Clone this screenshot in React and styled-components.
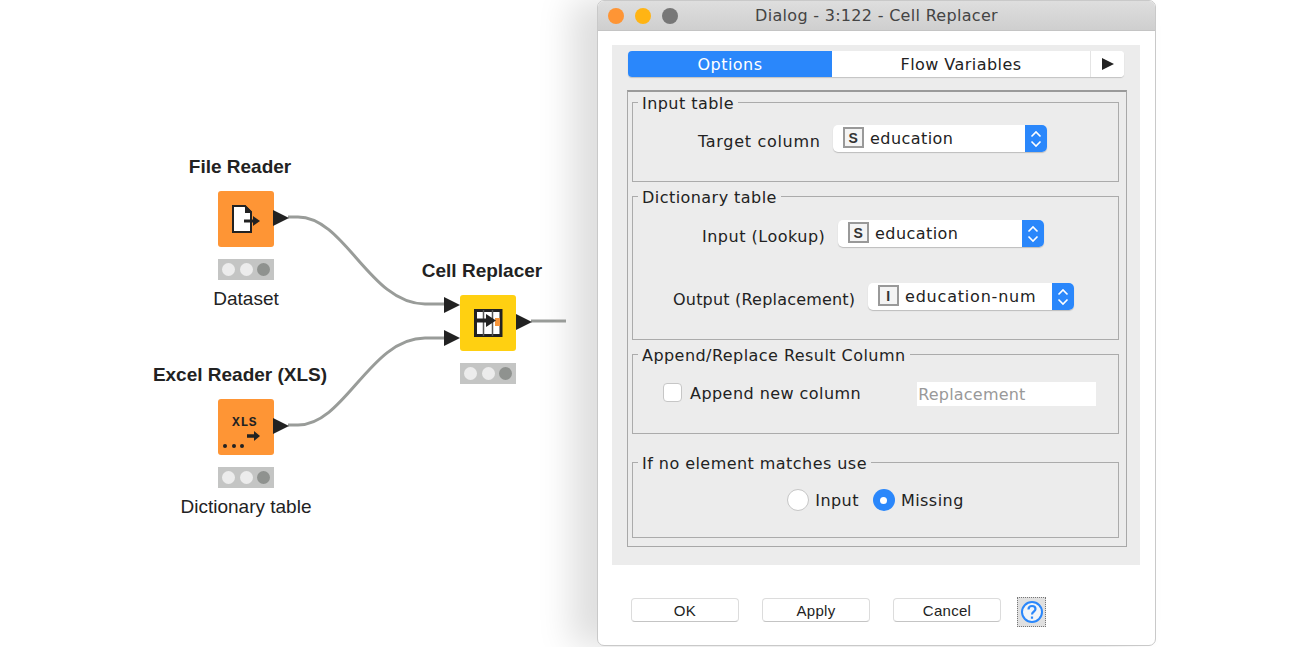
import React from "react";
import styled, { createGlobalStyle } from "styled-components";

const Global = createGlobalStyle`
  html, body { margin: 0; padding: 0; background: #fff; }
  body { font-family: "DejaVu Sans", sans-serif; color: #222; }
`;

const Page = styled.div`
  display: flex;
  width: 1302px;
  height: 647px;
  overflow: hidden;
  background: #fff;
`;

const Canvas = styled.div`
  position: relative;
  flex: none;
  width: 597px;
  height: 647px;
`;

const Wires = styled.svg`
  position: absolute;
  left: 0;
  top: 0;
`;

const NodeColumn = styled.div`
  position: absolute;
  left: ${(p) => p.$x}px;
  top: ${(p) => p.$y}px;
  width: 200px;
  display: flex;
  flex-direction: column;
  align-items: center;
  font-family: "Liberation Sans", Arial, sans-serif;
`;

const NodeTitle = styled.div`
  height: 20px;
  line-height: 20px;
  font-size: 19px;
  font-weight: 700;
  color: #222;
  white-space: nowrap;
  margin-right: 12px;
`;

const NodeBody = styled.div`
  position: relative;
  width: 56px;
  height: 56px;
  margin-top: 14px;
  border-radius: 3px;
  background: ${(p) => p.$color};
`;

const NodeIcon = styled.svg`
  position: absolute;
  left: 0;
  top: 0;
`;

const Port = styled.svg`
  position: absolute;
  left: ${(p) => p.$x}px;
  top: ${(p) => p.$y}px;
`;

const StatusBar = styled.div`
  width: 56px;
  height: 21px;
  margin-top: 12px;
  padding: 0 4px;
  box-sizing: border-box;
  display: flex;
  align-items: center;
  justify-content: space-between;
  background: #c4c5c4;
`;

const Lamp = styled.span`
  width: 13px;
  height: 13px;
  border-radius: 50%;
  background: ${(p) => (p.$off ? "#8f928f" : "#ececec")};
`;

const NodeLabel = styled.div`
  height: 20px;
  line-height: 20px;
  margin-top: 9px;
  font-size: 19px;
  color: #222;
  white-space: nowrap;
`;

const Dialog = styled.div`
  flex: none;
  width: 559px;
  height: 646px;
  box-sizing: border-box;
  border: 1px solid #c9c9c9;
  border-radius: 7px;
  background: #fff;
  box-shadow: -26px 0 34px rgba(0, 0, 0, 0.13);
  overflow: hidden;
`;

const TitleBar = styled.div`
  position: relative;
  height: 30px;
  box-sizing: border-box;
  display: flex;
  align-items: center;
  justify-content: center;
  background: linear-gradient(#dedede, #cfcfcf);
  border-bottom: 1px solid #c4c4c4;
  font-size: 16px;
  letter-spacing: 0.3px;
  color: #444;
`;

const Lights = styled.div`
  position: absolute;
  left: 10px;
  top: 7px;
  display: flex;
  gap: 11px;
`;

const Light = styled.span`
  width: 16px;
  height: 16px;
  border-radius: 50%;
  background: ${(p) => p.$color};
`;

const Panel = styled.div`
  width: 528px;
  height: 520px;
  margin: 14px 0 0 14px;
  padding-top: 6px;
  box-sizing: border-box;
  background: #ececec;
`;

const TabBar = styled.div`
  display: flex;
  width: 496px;
  height: 26px;
  margin-left: 16px;
  border-radius: 4px;
  background: #fff;
  box-shadow: 0 1px 1px #c2c2c2;
  overflow: hidden;
  font-size: 16px;
  letter-spacing: 0.45px;
`;

const Tab = styled.div`
  display: flex;
  align-items: center;
  justify-content: center;
  width: ${(p) => p.$width}px;
  background: ${(p) => (p.$active ? "#2a87fb" : "#fff")};
  color: ${(p) => (p.$active ? "#fff" : "#222")};
  border-right: ${(p) => (p.$divider ? "1px solid #e4e4e4" : "none")};
  box-sizing: border-box;
`;

const TabBody = styled.div`
  width: 500px;
  height: 457px;
  margin: 13px 0 0 15px;
  padding: 10px 7px 0 4px;
  box-sizing: border-box;
  border: 1px solid #a8a8a8;
  border-top: 2px solid #9a9a9a;
`;

const Group = styled.div`
  position: relative;
  width: 487px;
  height: ${(p) => p.$height}px;
  margin-top: ${(p) => p.$gap}px;
  padding-top: ${(p) => p.$pad}px;
  box-sizing: border-box;
  border: 1px solid #ababab;
  font-size: 16px;
  letter-spacing: 0.45px;
`;

const Legend = styled.div`
  position: absolute;
  left: 5px;
  top: -9px;
  padding: 0 4px;
  height: 20px;
  line-height: 20px;
  background: #ececec;
  color: #222;
  white-space: nowrap;
`;

const Row = styled.div`
  display: flex;
  align-items: center;
  margin-left: ${(p) => p.$left}px;
  margin-top: ${(p) => p.$top || 0}px;
`;

const FieldLabel = styled.span`
  flex: none;
  width: ${(p) => p.$width}px;
  padding-top: 6px;
  white-space: nowrap;
  color: #222;
  letter-spacing: ${(p) => p.$track}px;
`;

const Combo = styled.div`
  display: flex;
  align-items: center;
  width: ${(p) => p.$width}px;
  height: 27px;
  box-sizing: border-box;
  border-radius: 5px;
  background: #fff;
  box-shadow: 0 1px 1px #bdbdbd;
  overflow: hidden;
`;

const TypeBadge = styled.span`
  flex: none;
  width: 21px;
  height: 21px;
  margin-left: 10px;
  margin-top: -2px;
  box-sizing: border-box;
  display: flex;
  align-items: center;
  justify-content: center;
  border: 2px solid #999;
  font-size: 14px;
  font-weight: 700;
  font-family: "Liberation Sans", Arial, sans-serif;
  color: #333;
  background: #f4f4f4;
`;

const ComboValue = styled.span`
  flex: 1;
  margin-left: 6px;
  margin-top: -1px;
  white-space: nowrap;
  color: #222;
  letter-spacing: ${(p) => p.$track}px;
`;

const Stepper = styled.span`
  flex: none;
  width: 22px;
  height: 100%;
  display: flex;
  align-items: center;
  justify-content: center;
  background: #2a87fb;
`;

const Checkbox = styled.span`
  flex: none;
  width: 19px;
  height: 19px;
  margin-bottom: 3px;
  box-sizing: border-box;
  border: 1px solid #c6c6c6;
  border-radius: 4px;
  background: #fff;
`;

const OptionText = styled.span`
  margin-left: ${(p) => p.$gap || 8}px;
  margin-bottom: ${(p) => p.$lift || 0}px;
  white-space: nowrap;
  color: #222;
`;

const TextField = styled.span`
  display: flex;
  align-items: center;
  flex: none;
  width: 179px;
  height: 24px;
  margin-left: 56px;
  padding-left: 1px;
  box-sizing: border-box;
  background: #fff;
  color: #999;
  letter-spacing: 0.2px;
`;

const RadioRow = styled.div`
  display: flex;
  align-items: center;
  justify-content: center;
  gap: 14px;
`;

const RadioOption = styled.span`
  display: flex;
  align-items: center;
`;

const Radio = styled.span`
  flex: none;
  width: 22px;
  height: 22px;
  box-sizing: border-box;
  border-radius: 50%;
  display: flex;
  align-items: center;
  justify-content: center;
  border: ${(p) => (p.$on ? "none" : "1px solid #c6c6c6")};
  background: ${(p) => (p.$on ? "#2a87fb" : "#fff")};
`;

const RadioDot = styled.span`
  width: 7px;
  height: 7px;
  border-radius: 50%;
  background: #fff;
`;

const Footer = styled.div`
  display: flex;
  align-items: flex-start;
  height: 30px;
  margin-top: 32px;
  padding-left: 33px;
  gap: 23px;
`;

const Button = styled.div`
  width: 108px;
  height: 24px;
  margin-top: 1px;
  box-sizing: border-box;
  display: flex;
  align-items: center;
  justify-content: center;
  border: 1px solid #dcdcdc;
  border-bottom-color: #c4c4c4;
  border-radius: 4px;
  background: #fff;
  font-family: "Liberation Sans", Arial, sans-serif;
  font-size: 15px;
  letter-spacing: 0.3px;
  color: #222;
`;

const HelpButton = styled.div`
  width: 29px;
  height: 30px;
  margin-left: -7px;
  box-sizing: border-box;
  display: flex;
  align-items: center;
  justify-content: center;
  border: 1px dotted #777;
  background: #e0e0e0;
`;

const Chevrons = () => (
  <svg width="14" height="20" viewBox="0 0 14 20" fill="none" stroke="#fff" strokeWidth="1.6">
    <path d="M2.5 7.5 7 3l4.5 4.5" />
    <path d="M2.5 12.5 7 17l4.5-4.5" />
  </svg>
);

const PortTriangle = ({ x, y }) => (
  <Port $x={x} $y={y} width="16" height="16" viewBox="0 0 16 16">
    <path d="M0 0 16 8 0 16Z" fill="#222" />
  </Port>
);

const ReaderIcon = () => (
  <NodeIcon width="56" height="56" viewBox="0 0 56 56">
    <path d="M15 15H27L33 21V41H15Z" fill="#fff" stroke="#222" strokeWidth="2" />
    <path d="M27 14 34 21V22H27Z" fill="#222" />
    <path d="M26 30H36" stroke="#222" strokeWidth="3" />
    <path d="M35 25 42 30 35 35Z" fill="#222" />
  </NodeIcon>
);

const ExcelIcon = () => (
  <NodeIcon width="56" height="56" viewBox="0 0 56 56">
    <text x="14" y="27" fontFamily="Liberation Mono, monospace" fontSize="13" fontWeight="700" letterSpacing="0.6" fill="#222">XLS</text>
    <path d="M29 37H37" stroke="#222" strokeWidth="3.5" />
    <path d="M36 32 42 37 36 42Z" fill="#222" />
    <circle cx="7" cy="47" r="2" fill="#222" />
    <circle cx="16" cy="47" r="2" fill="#222" />
    <circle cx="24" cy="47" r="2" fill="#222" />
  </NodeIcon>
);

const ReplacerIcon = () => (
  <NodeIcon width="56" height="56" viewBox="0 0 56 56">
    <rect x="15.5" y="15.5" width="25.5" height="25" fill="#fff" stroke="#222" strokeWidth="3" />
    <path d="M23.5 15V41M32.5 15V41" stroke="#555" strokeWidth="1.5" />
    <rect x="35" y="23" width="5" height="8" fill="#f7953a" />
    <path d="M17 25.5H28" stroke="#222" strokeWidth="4" />
    <path d="M26 19 36 25.5 26 32Z" fill="#222" />
  </NodeIcon>
);

const HelpIcon = () => (
  <svg width="24" height="24" viewBox="0 0 24 24" fill="none" stroke="#2a87fb" strokeWidth="2">
    <circle cx="12" cy="12" r="10" fill="#f2f5f8" />
    <path d="M8.5 9.5C8.5 7 10 6 12 6s3.5 1.2 3.5 3c0 2.5-3.5 2.8-3.5 5.5" strokeWidth="2.2" />
    <path d="M12 16.5v2.2" strokeWidth="2.2" />
  </svg>
);

const WorkflowNode = ({ x, y, title, label, color, icon, children }) => (
  <NodeColumn $x={x} $y={y}>
    <NodeTitle>{title}</NodeTitle>
    <NodeBody $color={color}>
      {icon}
      {children}
    </NodeBody>
    <StatusBar>
      <Lamp />
      <Lamp />
      <Lamp $off />
    </StatusBar>
    {label && <NodeLabel>{label}</NodeLabel>}
  </NodeColumn>
);

const ColumnCombo = ({ width, type, value, track = 0.45 }) => (
  <Combo $width={width}>
    <TypeBadge>{type}</TypeBadge>
    <ComboValue $track={track}>{value}</ComboValue>
    <Stepper>
      <Chevrons />
    </Stepper>
  </Combo>
);

export default function App() {
  return (
    <Page>
      <Global />
      <Canvas>
        <Wires width="597" height="647" viewBox="0 0 597 647" fill="none" stroke="#999c99" strokeWidth="3">
          <path d="M288 217H298C345 217 370 304 425 304H445" />
          <path d="M288 425H298C345 425 370 338 425 338H445" />
          <path d="M531 321H566" />
        </Wires>
        <WorkflowNode x={146} y={157} title="File Reader" label="Dataset" color="#fe9535" icon={<ReaderIcon />}>
          <PortTriangle x={55} y={19} />
        </WorkflowNode>
        <WorkflowNode x={146} y={365} title="Excel Reader (XLS)" label="Dictionary table" color="#fe9535" icon={<ExcelIcon />}>
          <PortTriangle x={55} y={19} />
        </WorkflowNode>
        <WorkflowNode x={388} y={261} title="Cell Replacer" color="#ffd011" icon={<ReplacerIcon />}>
          <PortTriangle x={-16} y={2} />
          <PortTriangle x={-16} y={35} />
          <PortTriangle x={56} y={19} />
        </WorkflowNode>
      </Canvas>
      <Dialog>
        <TitleBar>
          <Lights>
            <Light $color="#fe9535" />
            <Light $color="#ffb414" />
            <Light $color="#777" />
          </Lights>
          Dialog - 3:122 - Cell Replacer
        </TitleBar>
        <Panel>
          <TabBar>
            <Tab $width={204} $active>Options</Tab>
            <Tab $width={259} $divider>Flow Variables</Tab>
            <Tab $width={33}>
              <svg width="12" height="12" viewBox="0 0 12 12"><path d="M0 0 12 6 0 12Z" fill="#222" /></svg>
            </Tab>
          </TabBar>
          <TabBody>
            <Group $height={80} $gap={0} $pad={22}>
              <Legend>Input table</Legend>
              <Row $left={65}>
                <FieldLabel $width={135} $track={0.7}>Target column</FieldLabel>
                <ColumnCombo width={214} type="S" value="education" />
              </Row>
            </Group>
            <Group $height={144} $gap={14} $pad={23}>
              <Legend>Dictionary table</Legend>
              <Row $left={69}>
                <FieldLabel $width={136} $track={0.5}>Input (Lookup)</FieldLabel>
                <ColumnCombo width={206} type="S" value="education" />
              </Row>
              <Row $left={40} $top={36}>
                <FieldLabel $width={195} $track={0.2}>Output (Replacement)</FieldLabel>
                <ColumnCombo width={206} type="I" value="education-num" track={0.8} />
              </Row>
            </Group>
            <Group $height={80} $gap={14} $pad={27}>
              <Legend>Append/Replace Result Column</Legend>
              <Row $left={30}>
                <Checkbox />
                <OptionText $lift={2}>Append new column</OptionText>
                <TextField>Replacement</TextField>
              </Row>
            </Group>
            <Group $height={76} $gap={28} $pad={26}>
              <Legend>If no element matches use</Legend>
              <RadioRow>
                <RadioOption>
                  <Radio />
                  <OptionText $gap={6}>Input</OptionText>
                </RadioOption>
                <RadioOption>
                  <Radio $on><RadioDot /></Radio>
                  <OptionText $gap={6}>Missing</OptionText>
                </RadioOption>
              </RadioRow>
            </Group>
          </TabBody>
        </Panel>
        <Footer>
          <Button>OK</Button>
          <Button>Apply</Button>
          <Button>Cancel</Button>
          <HelpButton><HelpIcon /></HelpButton>
        </Footer>
      </Dialog>
    </Page>
  );
}
